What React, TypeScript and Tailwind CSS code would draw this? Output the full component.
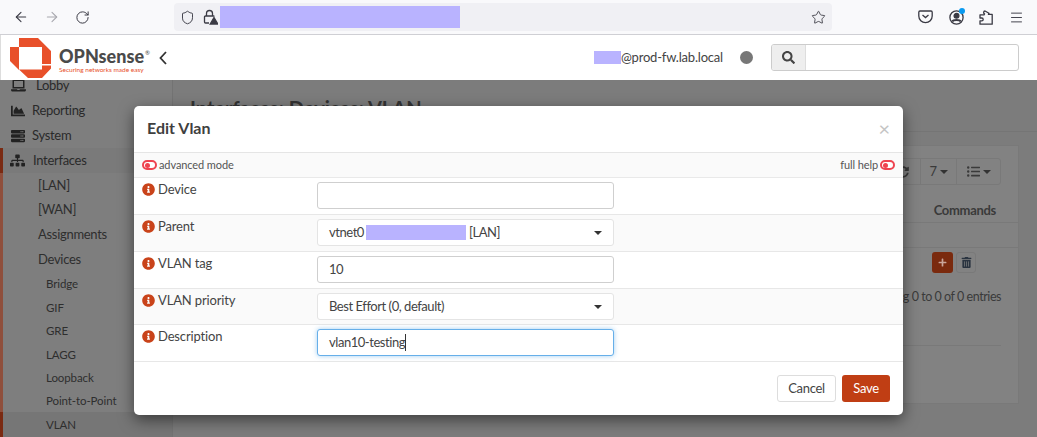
import React from "react";
import { ArrowLeft, ArrowRight, RotateCw, Shield, Star, Menu } from "lucide-react";
import { FaLaptop, FaChartArea, FaServer, FaSitemap, FaInfoCircle, FaTrashAlt, FaListUl, FaPlus, FaSyncAlt, FaSearch } from "react-icons/fa";

const font = "font-['Lato','Noto_Sans',sans-serif]";
const base = "text-[13px] tracking-[-0.3px]";
const field = "text-[13px] tracking-[-0.45px]";

function Toggle() {
  return (
    <span className="flex h-[10px] w-[15px] items-center rounded-full border-2 border-[#ee4450] bg-white pl-[1px]">
      <span className="h-[5px] w-[5px] rounded-full bg-[#ee4450]" />
    </span>
  );
}

function Caret() {
  return <span className="h-0 w-0 border-x-[4px] border-t-[4px] border-x-transparent border-t-[#333]" />;
}

function Row({ label, children, alt, h }: { label: string; children: React.ReactNode; alt?: boolean; h: string }) {
  return (
    <div className={`flex border-b border-[#e7e7e7] ${h} ${alt ? "bg-[#fafafa]" : "bg-white"}`}>
      <div className="flex w-[183px] items-start gap-[3px] pl-2 pt-[1px] text-[13px] leading-5 tracking-[-0.15px] text-[#444]">
        <FaInfoCircle className="mt-[4px] h-[13px] w-[13px] shrink-0 text-[#c9431a]" />
        <span>{label}</span>
      </div>
      <div className="w-[297px] pt-1">{children}</div>
    </div>
  );
}

function SelectBox({ children }: { children: React.ReactNode }) {
  return (
    <div className={`flex h-[27px] items-center justify-between rounded-[3px] border border-[#e4e4e4] bg-white px-[11px] text-[#444] ${field}`}>
      <div className="flex items-center">{children}</div>
      <Caret />
    </div>
  );
}

function TextBox({ value, focus }: { value?: string; focus?: boolean }) {
  return (
    <div
      className={`flex h-[27px] items-center rounded-[3px] border bg-white pl-[11px] text-[#444] ${field} ${
        focus ? "border-[#66afe9] shadow-[0_0_5px_rgba(102,175,233,0.6)]" : "border-[#cfcfcf]"
      }`}
    >
      {value}
      {focus && <span className="h-[17px] w-px bg-[#333]" />}
    </div>
  );
}

function NavItem({ icon, label, gap }: { icon: React.ReactNode; label: string; gap: string }) {
  return (
    <div className={`flex h-[25px] items-center pl-[10px] text-[#2a2a2a] ${base} ${gap}`}>
      <span className="flex w-[16px] justify-center">{icon}</span>
      <span>{label}</span>
    </div>
  );
}

function SubItem({ label, cls, h, active }: { label: string; cls: string; h: string; active?: boolean }) {
  return (
    <div className={`flex items-center border-l-[3px] ${active ? "border-[#7a2a12] bg-[#767676]" : "border-[#8f4f3c]"} ${h} ${cls} text-[#2e2e2e]`}>
      {label}
    </div>
  );
}

const lvl2 = `pl-[35px] ${base}`;
const lvl3 = "pl-[43px] text-[11.5px] tracking-[-0.1px]";

export default function App() {
  return (
    <div className={`relative flex h-[437px] w-[1037px] flex-col overflow-hidden bg-[#7c7c7c] ${font}`}>
      {/* browser toolbar */}
      <div className="flex h-[35px] shrink-0 items-center border-b border-[#cfcfd4] bg-[#f9f9fb] text-[#3a3a44]">
        <div className="flex w-[174px] items-center gap-[15px] pl-[13px]">
          <ArrowLeft size={16} strokeWidth={1.6} />
          <ArrowRight size={16} strokeWidth={1.6} className="text-[#a8a8ae]" />
          <RotateCw size={15} strokeWidth={1.6} />
        </div>
        <div className="flex h-[28px] w-[658px] items-center rounded-[4px] bg-[#f0f0f4] pl-[6px] pr-[6px]">
          <Shield size={15} strokeWidth={1.5} />
          <svg width="15" height="16" viewBox="0 0 15 16" className="ml-[8px]" fill="none" stroke="#3a3a44" strokeWidth="1.3">
            <path d="M3.500 7V4.500a3 3 0 0 1 6 0V7" />
            <path d="M6 14H2.500a1 1 0 0 1-1-1V8a1 1 0 0 1 1-1h8a1 1 0 0 1 .8.5" />
            <path d="M11 8.500l3.800 6.500H7.200z" fill="#3a3a44" />
          </svg>
          <div className="ml-[2px] h-[22px] w-[240px] bg-[#b9b3ff]" />
          <Star size={15} strokeWidth={1.4} className="ml-auto" />
        </div>
        <div className="ml-[86px] flex items-center gap-[15.5px]">
          <svg width="15" height="14" viewBox="0 0 15 14" fill="none" stroke="#3a3a44" strokeWidth="1.3">
            <path d="M2 1h11a1.200 1.200 0 0 1 1.200 1.200V6a6.700 6.700 0 0 1-13.400 0V2.200A1.200 1.200 0 0 1 2 1z" />
            <path d="M4.500 5l3 2.600 3-2.600" />
          </svg>
          <div className="relative">
            <svg width="15" height="15" viewBox="0 0 15 15" fill="none" stroke="#3a3a44" strokeWidth="1.3">
              <circle cx="7.500" cy="7.500" r="6.600" />
              <circle cx="7.500" cy="5.800" r="2.400" fill="#3a3a44" />
              <path d="M3.200 11.500c1-2 7.600-2 8.600 0" strokeWidth="2" />
            </svg>
            <span className="absolute -right-[1px] -top-[2px] h-[6px] w-[6px] rounded-full bg-[#0a9af0]" />
          </div>
          <svg width="14" height="15" viewBox="0 0 14 15" fill="none" stroke="#3a3a44" strokeWidth="1.3" strokeLinejoin="round">
            <path d="M6 1l4 2.200-.6 1.200h3.800v9.800H1v-3.400h1.800a1.300 1.300 0 0 0 0-2.800H1V4.800h4l.6-.9A1.500 1.500 0 0 1 6 1z" />
          </svg>
          <Menu size={15} strokeWidth={1.5} />
        </div>
      </div>

      {/* app header */}
      <div className="flex h-[45px] shrink-0 items-center border-l border-[#ddd] bg-white">
        <svg width="42" height="42" viewBox="0 0 42 42" className="ml-[9px] shrink-0">
          <path fill="#e8502a" d="M9 1h19l13 13v13h-9V10H9z" />
          <path fill="#e8502a" d="M0 10h9v23l-9-9z" />
          <path fill="#e8502a" d="M9 33h23v-4h9v3l-9 9.500H18z" transform="translate(0 -0.500)" />
        </svg>
        <div className="ml-[7px] flex w-[85px] flex-col pt-[6px]">
          <span className="whitespace-nowrap text-[18px] font-black leading-[18px] text-[#4a4a4a]">
            OPNsense<span className="ml-[1px] align-[8px] text-[6px] font-normal leading-none">®</span>
          </span>
          <span className="mt-[1px] whitespace-nowrap text-[6.5px] leading-[8px] text-[#e8502a]">Securing networks made easy</span>
        </div>
        <svg width="8" height="14" viewBox="0 0 8 14" className="ml-[15px]" fill="none" stroke="#333" strokeWidth="1.800">
          <path d="M7 1L1.500 7 7 13" />
        </svg>
        <div className="ml-auto flex items-center pr-[18px]">
          <span className="h-[13px] w-[27px] bg-[#b9b3ff]" />
          <span className="text-[13px] tracking-[-0.2px] text-[#444]">@prod-fw.lab.local</span>
          <span className="ml-[17px] h-[13px] w-[13px] rounded-full bg-[#777]" />
          <div className="ml-[18px] flex h-[27px] w-[248px] overflow-hidden rounded-[3px] border border-[#ccc]">
            <span className="flex w-[34px] items-center justify-center border-r border-[#ddd] bg-[#eee]">
              <FaSearch size={13} className="text-[#444]" />
            </span>
          </div>
        </div>
      </div>

      {/* dimmed page */}
      <div className="flex min-h-0 flex-1">
        <div className="w-[173px] shrink-0 overflow-hidden border-r border-[#737373] bg-[#7e7e7e]">
          <div className="-mt-[7px] flex flex-col">
            <NavItem icon={<FaLaptop size={15} className="text-[#222]" />} label="Lobby" gap="gap-[10px]" />
            <NavItem icon={<FaChartArea size={14} className="text-[#222]" />} label="Reporting" gap="gap-[6px]" />
            <NavItem icon={<FaServer size={14} className="text-[#222]" />} label="System" gap="gap-[6px]" />
            <div className={`flex h-[25px] items-center gap-[8px] border-l-[3px] border-[#7a2a12] bg-[#7a7a7a] pl-[7px] text-[#2a2a2a] ${base}`}>
              <FaSitemap size={15} className="text-[#222]" />
              <span>Interfaces</span>
            </div>
            <SubItem label="[LAN]" cls={lvl2} h="h-[25px]" />
            <SubItem label="[WAN]" cls={lvl2} h="h-[24px]" />
            <SubItem label="Assignments" cls={lvl2} h="h-[25px]" />
            <SubItem label="Devices" cls={lvl2} h="h-[25px]" />
            <SubItem label="Bridge" cls={lvl3} h="h-[24px]" />
            <SubItem label="GIF" cls={lvl3} h="h-[23px]" />
            <SubItem label="GRE" cls={lvl3} h="h-[24px]" />
            <SubItem label="LAGG" cls={lvl3} h="h-[23px]" />
            <SubItem label="Loopback" cls={lvl3} h="h-[23px]" />
            <SubItem label="Point-to-Point" cls={lvl3} h="h-[23px]" />
            <SubItem label="VLAN" cls={lvl3} h="h-[26px]" active />
          </div>
        </div>
        <div className="flex min-w-0 flex-1 flex-col">
          <div className="h-[52px] shrink-0 border-b border-[#757575] pl-[17px] pt-[16px] text-[20px] font-bold leading-6 text-[#333]">
            Interfaces: Devices: VLAN
          </div>
          <div className="mr-[18px] ml-[17px] mt-[13px] flex h-[259px] flex-col items-end border border-[#797979] bg-[#828282] pr-[17px] pt-[12px] text-[#3a3a3a]">
            <div className={`flex h-[27px] items-center rounded-[3px] border border-[#797979] ${base}`}>
              <span className="flex h-full w-[36px] items-center justify-center border-x border-[#797979]"><FaSyncAlt size={12} /></span>
              <span className="flex h-full w-[36px] items-center justify-center gap-[3px] border-r border-[#797979]">7<Caret /></span>
              <span className="flex h-full w-[43px] items-center justify-center gap-[3px]"><FaListUl size={13} /><Caret /></span>
            </div>
            <div className={`mt-[16px] -mr-[17px] flex h-[22px] w-full items-center justify-end border-b border-[#797979] pb-[2px] pr-[22px] font-bold ${base}`}>Commands</div>
            <div className="-mr-[17px] h-[25px] w-full border-b border-[#797979]" />
            <div className="mt-[4px] flex gap-[3px] pr-[25px]">
              <span className="flex h-[21px] w-[21px] items-center justify-center rounded-[3px] bg-[#7a2a0e]"><FaPlus size={9} className="text-[#c9a59a]" /></span>
              <span className="flex h-[21px] w-[20px] items-center justify-center rounded-[3px] border border-[#797979] text-[#2a3440]"><FaTrashAlt size={11} /></span>
            </div>
            <div className="mt-[15px] text-[12.5px] tracking-[-0.45px]">g 0 to 0 of 0 entries</div>
            <div className="mt-[38px] h-px w-[100px] bg-[#797979]" />
          </div>
        </div>
      </div>

      {/* modal */}
      <div className="absolute left-[134px] top-[106px] flex h-[309px] w-[769px] flex-col rounded-[5px] bg-white shadow-[0_5px_15px_rgba(0,0,0,0.5)]">
        <div className="flex h-[47px] shrink-0 items-center justify-between border-b border-[#e5e5e5] px-[13px] pb-[2px]">
          <span className="text-[16px] font-bold text-[#3f3f3f]">Edit Vlan</span>
          <span className="text-[20px] leading-none text-[#c4c4c4]">×</span>
        </div>
        <div className="flex h-[25px] shrink-0 items-center justify-between border-b border-[#e9e9e9] bg-[#fafafa] px-2 text-[11px] tracking-[-0.1px] text-[#555]">
          <span className="flex items-center gap-[2px]"><Toggle />advanced mode</span>
          <span className="flex items-center gap-[2px]">full help<Toggle /></span>
        </div>
        <Row label="Device" h="h-[37px]"><TextBox /></Row>
        <Row label="Parent" alt h="h-[37px]">
          <SelectBox>
            <span>vtnet0</span>
            <span className="ml-[2px] h-[15px] w-[100px] bg-[#b9b3ff]" />
            <span className="ml-[3px]">[LAN]</span>
          </SelectBox>
        </Row>
        <Row label="VLAN tag" h="h-[37px]"><TextBox value="10" /></Row>
        <Row label="VLAN priority" alt h="h-[36px]"><SelectBox>Best Effort (0, default)</SelectBox></Row>
        <Row label="Description" h="h-[37px]"><TextBox value="vlan10-testing" focus /></Row>
        <div className="flex flex-1 items-start justify-end gap-[6px] pr-[13px] pt-[13px]">
          <span className={`flex h-[27px] w-[59px] items-center justify-center rounded-[3px] border border-[#ddd] text-[#444] ${base}`}>Cancel</span>
          <span className={`flex h-[27px] w-[48px] items-center justify-center rounded-[3px] bg-[#c03e14] text-white ${base}`}>Save</span>
        </div>
      </div>
    </div>
  );
}
